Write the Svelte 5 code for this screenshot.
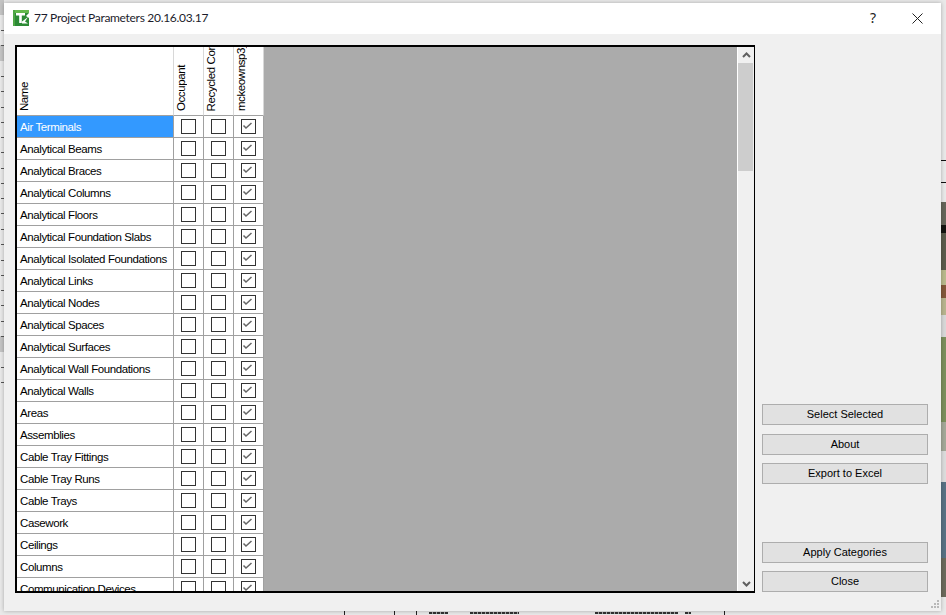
<script>
  const names = ['Air Terminals','Analytical Beams','Analytical Braces','Analytical Columns','Analytical Floors','Analytical Foundation Slabs','Analytical Isolated Foundations','Analytical Links','Analytical Nodes','Analytical Spaces','Analytical Surfaces','Analytical Wall Foundations','Analytical Walls','Areas','Assemblies','Cable Tray Fittings','Cable Tray Runs','Cable Trays','Casework','Ceilings','Columns','Communication Devices'];
  const cols = ['Occupant','Recycled Content','mckeownsp3_'];
  const dots = [30,45,76,91,107,122,137,152,168,183,198,213,229,244,260,275,290,305,321,336,367,382];
  const strips = [[202,23,'#66665a'],[225,8,'#141410'],[233,37,'#5c5c4c'],[270,15,'#b9b98c'],[285,13,'#84583a'],[298,17,'#b8b48e'],[315,22,'#d8d8d8'],[337,85,'#7c8f5c'],[422,29,'#a4a898'],[451,31,'#dcdcdc'],[482,76,'#587284'],[558,39,'#6c6a5c']];
  const lines = [344,394,416,724];
  const smudges = [[429,19],[470,49],[595,83],[685,6]];
</script>

<div class="desktop">
  <div class="left-block top"></div>
  <div class="left-block b1"></div>
  <div class="left-block b2"></div>
  {#each dots as y}
    <div class="dot" style="top:{y}px"></div>
  {/each}
  <div class="rule r1"></div>
  <div class="rule r2"></div>
  {#each strips as s}
    <div class="strip" style="top:{s[0]}px;height:{s[1]}px;background:{s[2]}"></div>
  {/each}
  {#each lines as x}
    <div class="line" style="left:{x}px"></div>
  {/each}
  {#each smudges as m}
    <div class="smudge" style="left:{m[0]}px;width:{m[1]}px"></div>
  {/each}

  <div class="window">
    <header class="titlebar">
      <svg class="logo" viewBox="0 0 16 16" width="16" height="16">
        <rect width="16" height="16" fill="#2c8a35"/>
        <path d="M0 0h16v3H0z" fill="#63b84c"/>
        <path d="M0 0h2v16H0z" fill="#4ea645"/>
        <path d="M16 3v5l-3-2z" fill="#fff"/>
        <path d="M3 3h9v2.500H8.800V13H6.200V5.500H3z" fill="#fff"/>
        <path d="M9 11.500l6-4.500-3 4.500 3 2H9z" fill="#fff"/>
      </svg>
      <span class="title">77 Project Parameters 20.16.03.17</span>
      <span class="help">?</span>
      <svg class="close" viewBox="0 0 11 11" width="11" height="11"><path d="M.5.5l10 10M10.500.5l-10 10" stroke="#222" fill="none"/></svg>
    </header>
    <div class="body">
      <div class="grid">
        <div class="table">
          <div class="row head">
            <div class="cell name"><span class="vert">Name</span></div>
            {#each cols as c}
              <div class="cell col"><span class="vert">{c}</span></div>
            {/each}
          </div>
          {#each names as n, i}
            <div class="row">
              <div class="cell name" class:sel={i === 0}>{n}</div>
              <div class="cell col"><span class="box"></span></div>
              <div class="cell col"><span class="box"></span></div>
              <div class="cell col">
                <span class="box">
                  <svg viewBox="0 0 11 11" width="11" height="11"><path d="M1.500 5.500l2.500 2.500 5.500-5" stroke="#666" stroke-width="1.500" fill="none"/></svg>
                </span>
              </div>
            </div>
          {/each}
        </div>
        <div class="scroll">
          <svg viewBox="0 0 9 6" width="9" height="6"><path d="M1 5l3.500-3.500L8 5" stroke="#606060" stroke-width="2" fill="none"/></svg>
          <div class="track"><div class="thumb"></div></div>
          <svg viewBox="0 0 9 6" width="9" height="6"><path d="M1 1l3.500 3.500L8 1" stroke="#606060" stroke-width="2" fill="none"/></svg>
        </div>
      </div>
      <aside class="side">
        <button>Select Selected</button>
        <button class="b-about">About</button>
        <button class="b-export">Export to Excel</button>
        <button class="b-apply">Apply Categories</button>
        <button class="b-close">Close</button>
      </aside>
      <svg class="grip" viewBox="0 0 10 10" width="10" height="10">
        <g fill="#b8b8b8"><rect x="7" y="0" width="2" height="2"/><rect x="4" y="3" width="2" height="2"/><rect x="7" y="3" width="2" height="2"/><rect x="1" y="6" width="2" height="2"/><rect x="4" y="6" width="2" height="2"/><rect x="7" y="6" width="2" height="2"/></g>
      </svg>
    </div>
  </div>
</div>

<style>
  :global(body) { margin: 0; background: #e8e8e8; overflow: hidden; }
  .desktop { position: relative; width: 946px; height: 615px; overflow: hidden; background: #e9e9e9; font-family: "Liberation Sans", Arial, sans-serif; }
  .left-block { position: absolute; left: 0; width: 4px; background: #c4c4c4; }
  .left-block.top { top: 0; height: 15px; }
  .left-block.b1 { top: 45px; height: 16px; }
  .left-block.b2 { top: 336px; height: 16px; }
  .dot { position: absolute; left: 1px; width: 3px; height: 1px; background: #555; }
  .rule { position: absolute; left: 941px; width: 5px; height: 1px; background: #111; }
  .r1 { top: 160px; }
  .r2 { top: 182px; }
  .strip { position: absolute; left: 941px; width: 5px; }
  .line { position: absolute; top: 611px; width: 1px; height: 4px; background: #222; }
  .smudge { position: absolute; top: 612px; height: 2px; background: repeating-linear-gradient(90deg, #333 0 3px, #aaa 3px 4px); }
  .window { position: absolute; left: 4px; top: 3px; width: 937px; height: 608px; display: flex; flex-direction: column; background: #f0f0f0; box-shadow: 0 0 4px rgba(0,0,0,.28); }
  .titlebar { height: 31px; flex: none; background: #fff; display: flex; align-items: center; padding: 0 17px 2px 9px; box-sizing: border-box; }
  .logo { flex: none; }
  .title { margin-left: 5px; font: 12px Lato, "Noto Sans", sans-serif; letter-spacing: -.3px; color: #1c1c2c; flex: 1; }
  .help { font: 14px "Noto Sans", sans-serif; color: #222; margin-right: 36px; }
  .close { margin-bottom: -1px; margin-right: 1px; }
  .body { position: relative; flex: 1; display: flex; padding: 11px 13px 18px 11px; min-height: 0; }
  .grid { width: 740px; flex: none; box-sizing: border-box; border: 2px solid #000; border-width: 2px 1px 2px 2px; background: #ababab; display: flex; overflow: hidden; }
  .table { flex: 1; overflow: hidden; }
  .row { display: flex; height: 22px; }
  .row.head { height: 69px; }
  .cell { box-sizing: border-box; background: #fff; border-right: 1px solid #a0a0a0; border-bottom: 1px solid #a0a0a0; display: flex; align-items: center; color: #000; font-size: 11.500px; letter-spacing: -.4px; overflow: hidden; white-space: nowrap; }
  .head .cell { border-right-color: #d8d8d8; border-bottom-color: #a0a0a0; align-items: flex-end; padding: 0 0 4px 1px; }
  .name { width: 157px; padding-left: 3px; }
  .col { width: 30px; justify-content: center; }
  .head .col { justify-content: flex-start; }
  .sel { background: #3399ff; color: #fff; }
  .vert { writing-mode: vertical-rl; transform: rotate(180deg); line-height: 12px; }
  .box { width: 13px; height: 13px; box-sizing: content-box; border: 1px solid #333; display: flex; background: #fff; margin-top: -1px; }
  .scroll { width: 17px; flex: none; background: #f0f0f0; border-left: 1px solid #fff; display: flex; flex-direction: column; align-items: center; padding: 5px 0 4px; box-sizing: border-box; }
  .track { flex: 1; width: 100%; padding-top: 5px; margin-bottom: 4px; }
  .thumb { height: 108px; background: #cdcdcd; margin: 0 1px 0 0; }
  .side { width: 166px; margin-left: 7px; padding-top: 359px; display: flex; flex-direction: column; }
  button { height: 21px; flex: none; padding: 0 0 2px; box-sizing: border-box; border: 1px solid #adadad; background: #e1e1e1; font: 11px "Liberation Sans", Arial, sans-serif; color: #000; }
  .b-about { margin-top: 9px; }
  .b-export { margin-top: 8px; }
  .b-apply { margin-top: 58px; }
  .b-close { margin-top: 8px; }
  .grip { position: absolute; right: 1px; bottom: 1px; }
</style>
